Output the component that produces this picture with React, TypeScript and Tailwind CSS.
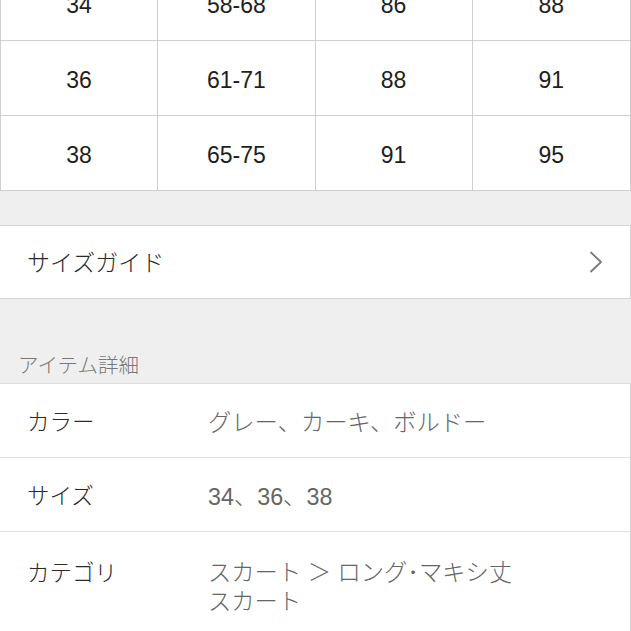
import React from 'react';

const rows = [
  ['34', '58-68', '86', '88'],
  ['36', '61-71', '88', '91'],
  ['38', '65-75', '91', '95'],
];

const details = [
  { label: 'カラー', value: ['グレー、カーキ、ボルドー'] },
  { label: 'サイズ', value: ['34、36、38'] },
  { label: 'カテゴリ', value: ['スカート ＞ ロング･マキシ丈', 'スカート'] },
];

function Chevron() {
  return (
    <svg width="14" height="22" viewBox="0 0 14 22" fill="none" className="text-[#7a7a7a]">
      <path d="M2 1.5 L12 11 L2 20.5" stroke="currentColor" strokeWidth="1.8" strokeLinecap="round" strokeLinejoin="round" />
    </svg>
  );
}

export default function App() {
  return (
    <div
      className="w-[631px] h-[631px] overflow-hidden bg-[#efefef] font-light"
      style={{ fontFamily: '"Liberation Sans", "Noto Sans CJK JP", sans-serif' }}
    >
      {/* size table, first row scrolled off the top */}
      <div className="-mt-[34px] bg-white border-x border-[#cfcfcf]">
        {rows.map((r, i) => (
          <div key={i} className="grid grid-cols-4 h-[75px] border-b border-[#cfcfcf]">
            {r.map((c, j) => (
              <div
                key={j}
                className={`flex items-center justify-center pt-[4px] text-[23px] text-[#1e1e1e] ${j < 3 ? 'border-r border-[#cfcfcf]' : ''}`}
              >
                {c}
              </div>
            ))}
          </div>
        ))}
      </div>

      <div className="h-[35px] border-b border-[#d3d3d3]" />

      <div className="h-[73px] bg-white border-b border-r border-[#d3d3d3] flex items-center justify-between pl-[27px] pr-[27px]">
        <span className="text-[23px] text-[#2a2a2a] pt-[2px]">サイズガイド</span>
        <Chevron />
      </div>

      <div className="h-[85px] flex items-end pl-[18px] pb-[1px] border-b border-[#dcdcdc]">
        <span className="text-[20.5px] text-[#777]">アイテム詳細</span>
      </div>

      <div className="bg-white border-r border-[#d3d3d3]">
        {details.map((d, i) => (
          <div
            key={i}
            className={`flex pl-[27px] ${i < details.length - 1 ? 'h-[74px] items-center pt-[5px] border-b border-[#e0e0e0]' : 'pt-[27px] pb-[30px]'}`}
          >
            <div className="w-[181px] text-[22.5px] text-[#2a2a2a] leading-[30px]">{d.label}</div>
            <div className="text-[23.3px] text-[#666] leading-[29px]">
              {d.value.map((v, k) => (
                <div key={k}>{v}</div>
              ))}
            </div>
          </div>
        ))}
      </div>
    </div>
  );
}
